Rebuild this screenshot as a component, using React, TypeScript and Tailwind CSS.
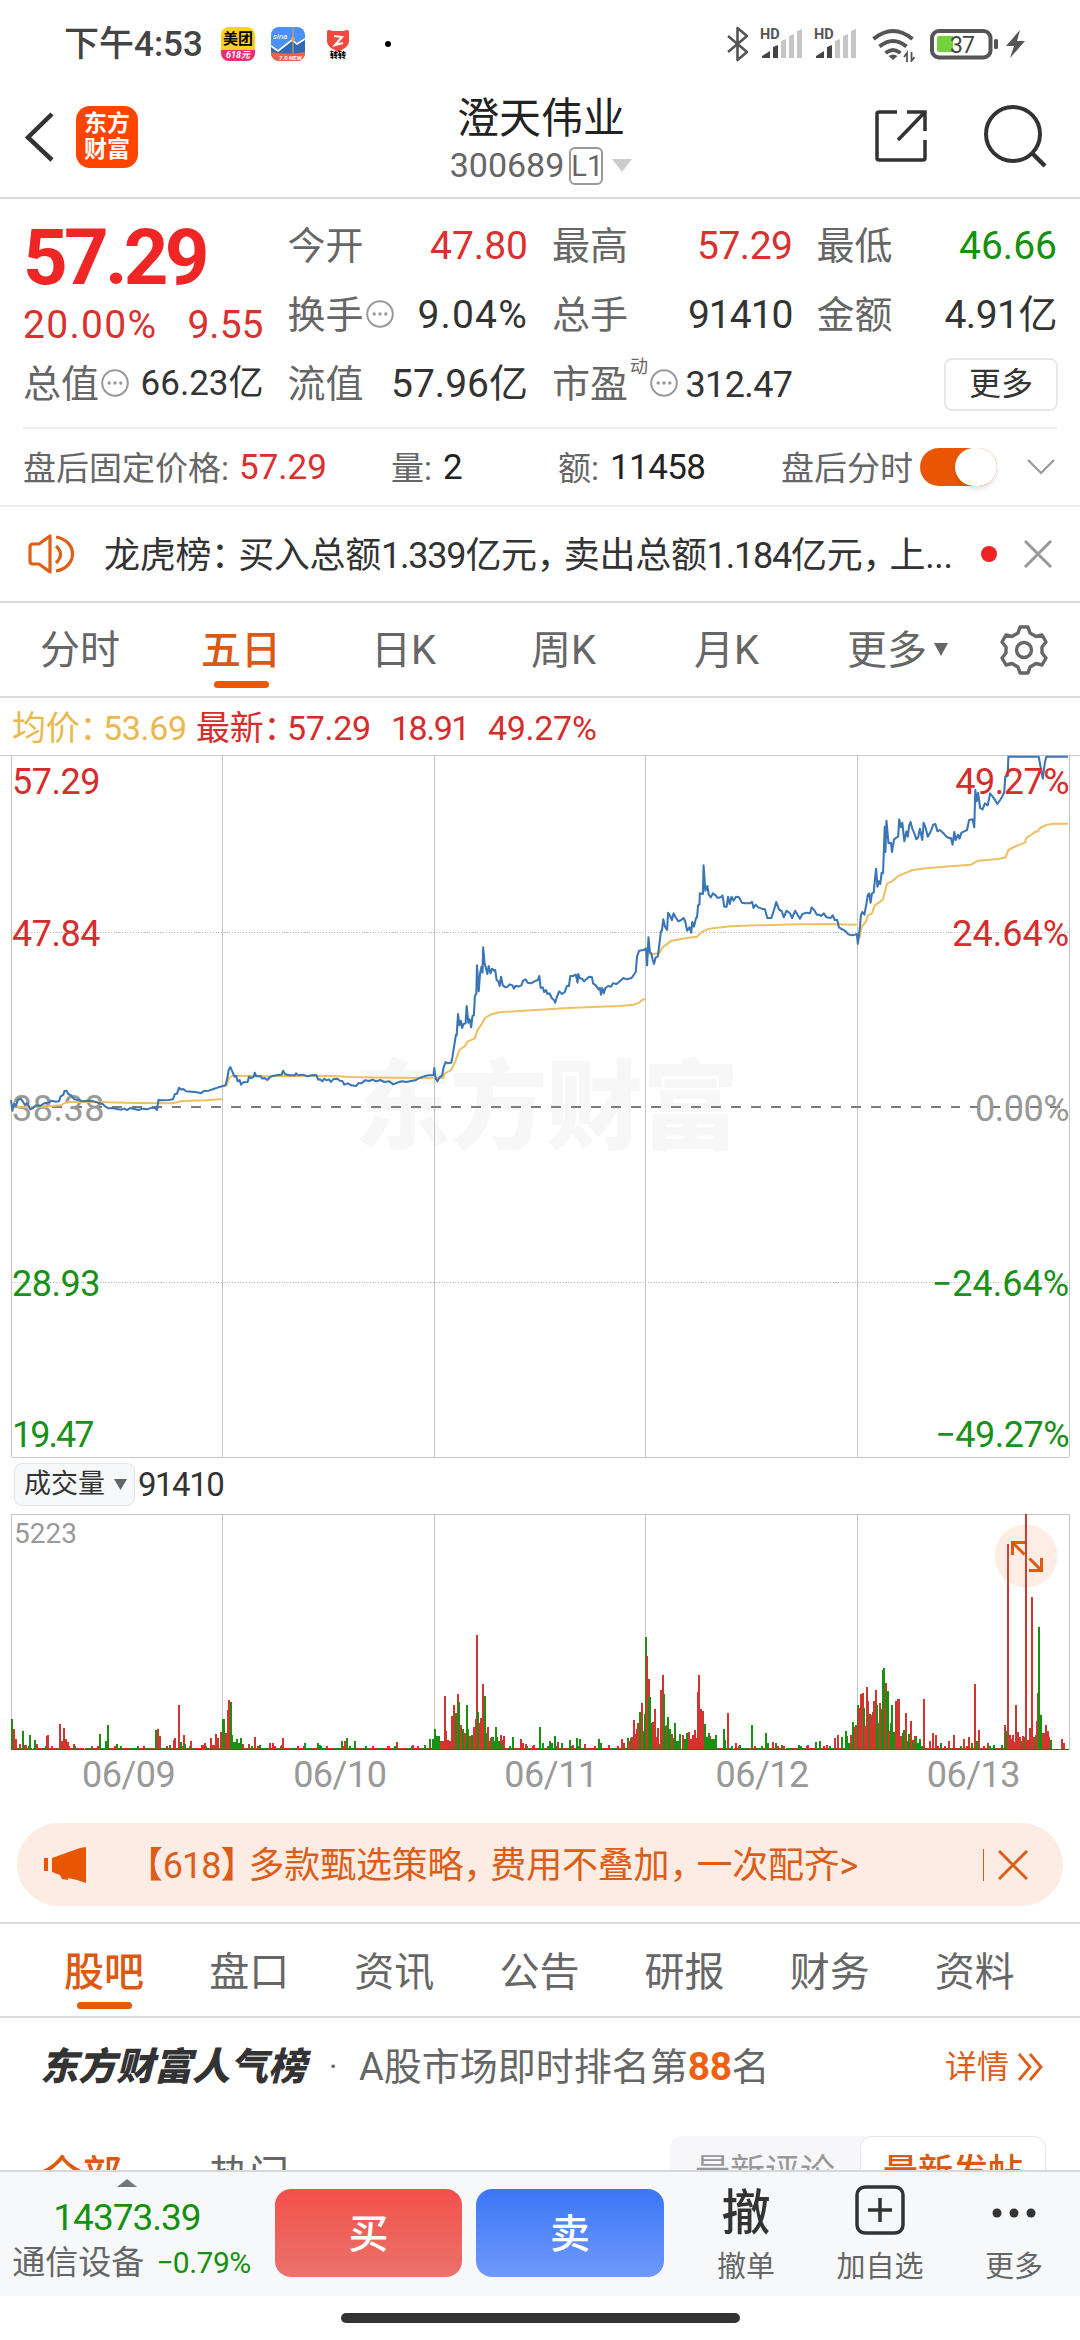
import type { ReactNode } from "react"

const RED = "#e62828"
const GREEN = "#1a8f12"

// Both charts share one horizontal scale: 3136 units across the screen
const DAY_LINES = [34, 646.5, 1261.5, 1874.5, 2489.5, 3105]

const PRICE = `32,1080 36,1112 41,1090 46,1098 52,1080 60,1076 66,1084 72,1094 80,1090 88,1108 96,1104 104,1096 116,1098 128,1090 140,1088 150,1082 162,1085 171,1084 176,1070 184,1064 187,1053 193,1052 198,1062 206,1066 216,1078 228,1080 240,1084 256,1082 272,1084 284,1088 298,1092 306,1100 316,1105 328,1104 340,1107 352,1109 360,1106 370,1110 378,1104 390,1107 402,1110 414,1106 428,1108 440,1103 450,1104 456,1110 460,1080 474,1081 490,1080 502,1078 508,1062 514,1061 520,1043 526,1049 532,1047 540,1054 556,1055 572,1057 584,1060 592,1053 606,1052 620,1047 634,1042 648,1038 655,1036 660,1014 664,990 669,981 675,996 681,1010 686,1008 690,1024 696,1020 700,1034 706,1027 712,1027 719,1026 723,1010 729,1014 736,1011 740,998 744,1009 756,1008 762,1016 768,1014 776,1020 784,1011 792,1008 806,1005 818,1004 822,992 828,1003 840,1006 856,1006 860,1000 866,1006 880,1004 892,1009 906,1006 918,1005 924,1019 930,1018 936,1024 942,1016 948,1021 955,1018 961,1026 968,1017 980,1016 986,1022 994,1023 1000,1034 1010,1030 1020,1036 1034,1038 1040,1030 1050,1030 1060,1021 1072,1023 1082,1019 1092,1024 1104,1020 1116,1026 1130,1024 1142,1033 1156,1027 1168,1024 1180,1026 1194,1023 1206,1021 1218,1014 1232,1009 1244,1006 1259,1006 1261,984 1265,1016 1270,1024 1276,1012 1284,1006 1288,982 1294,966 1300,970 1310,968 1314,950 1318,922 1324,884 1326,886 1330,822 1334,856 1338,842 1342,864 1346,852 1352,850 1355,798 1360,848 1364,838 1368,862 1372,828 1376,826 1379,768 1383,762 1385,676 1390,754 1394,700 1398,680 1401,698 1403,622 1407,670 1412,688 1415,702 1419,678 1424,700 1429,686 1434,692 1438,690 1442,720 1447,724 1451,738 1455,710 1460,736 1468,742 1474,740 1480,733 1488,736 1492,746 1498,737 1506,740 1514,736 1519,722 1526,718 1532,728 1542,730 1552,724 1562,720 1566,708 1570,744 1576,742 1580,756 1585,750 1590,762 1596,760 1602,774 1610,782 1612,788 1618,768 1624,754 1632,762 1640,756 1646,738 1652,738 1656,708 1664,708 1672,704 1677,728 1679,702 1683,714 1690,716 1696,724 1704,716 1712,710 1719,712 1722,730 1730,736 1738,748 1742,744 1745,764 1749,744 1753,760 1758,744 1766,738 1774,740 1780,730 1790,732 1800,724 1810,714 1820,718 1834,714 1842,702 1846,696 1850,648 1856,632 1868,630 1876,626 1879,676 1883,592 1887,636 1891,640 1895,658 1899,672 1904,652 1910,650 1915,610 1919,574 1922,572 1926,538 1931,560 1937,570 1940,518 1946,528 1951,540 1956,520 1963,534 1970,544 1978,540 1985,534 1990,546 1995,572 2002,562 2007,578 2010,546 2015,560 2021,534 2024,532 2027,496 2031,494 2032,460 2041,462 2043,376 2048,452 2054,438 2058,464 2064,472 2070,460 2078,466 2084,474 2092,472 2098,466 2103,500 2110,500 2114,470 2119,492 2124,470 2130,482 2137,470 2146,472 2154,488 2164,490 2176,490 2184,486 2188,504 2194,494 2202,502 2212,506 2221,508 2228,534 2240,534 2248,508 2254,486 2262,508 2270,514 2276,532 2284,512 2294,520 2300,534 2309,512 2318,528 2323,536 2330,522 2342,518 2352,520 2357,502 2364,510 2372,524 2378,524 2384,528 2392,520 2400,532 2412,534 2418,526 2424,540 2431,540 2436,562 2446,568 2456,574 2462,582 2472,586 2482,584 2488,582 2491,612 2497,560 2500,524 2504,516 2510,524 2516,490 2520,464 2524,460 2528,488 2532,460 2537,458 2542,404 2544,386 2548,440 2552,424 2556,432 2560,398 2564,400 2567,320 2569,260 2571,336 2574,242 2580,310 2587,308 2590,336 2596,298 2604,292 2608,290 2611,238 2616,262 2620,248 2626,304 2632,274 2636,290 2640,256 2644,246 2649,266 2655,280 2661,298 2666,292 2671,266 2678,300 2682,248 2688,264 2694,290 2702,276 2710,254 2716,252 2722,274 2729,270 2738,278 2748,290 2756,294 2761,294 2766,314 2771,276 2775,300 2782,284 2786,296 2792,278 2800,274 2808,270 2814,240 2824,238 2829,262 2832,150 2836,184 2840,158 2846,204 2853,208 2860,190 2868,196 2875,160 2881,168 2888,178 2896,192 2904,180 2910,170 2916,156 2919,110 2926,108 2928,50 3016,50 3020,72 3028,116 3034,68 3038,50 3101,50`

const AVERAGE = [
  "34,1098 60,1101 90,1102 120,1100 150,1098 176,1096 188,1089 204,1086 280,1086 400,1089 500,1090 530,1083 600,1081 646,1077",
  "648,1038 658,1036 666,1012 680,1007 780,1009 950,1007 1020,1011 1140,1013 1258,1014",
  "1263,1014 1286,1014 1292,1000 1310,990 1322,964 1334,930 1350,918 1358,904 1378,896 1386,872 1400,850 1408,834 1424,824 1450,817 1520,812 1568,809 1650,804 1720,801 1800,798 1840,794 1856,788 1864,780 1874,777",
  "1877,640 1900,642 1914,640 1924,622 1950,602 1990,595 2024,590 2040,574 2060,566 2120,559 2200,556 2320,553 2400,552 2488,554",
  "2491,600 2496,592 2502,560 2514,546 2520,526 2532,520 2540,496 2552,488 2564,478 2576,430 2590,424 2612,406 2632,398 2650,390 2690,385 2760,379 2820,374 2840,362 2900,357 2920,352 2928,330 2950,318 2976,308 2980,294 2998,282 3004,276 3014,274 3020,264 3040,254 3060,251 3101,251",
]

// x, height, colour of every visible volume spike
const SPIKES: [number, number, string][] = [
  [34, 92, "g"], [40, 62, "r"], [45, 32, "r"], [58, 17, "r"], [68, 56, "g"], [74, 14, "r"], [88, 43, "g"], [101, 28, "g"], [107, 16, "r"], [136, 40, "r"], [140, 43, "r"],
  [174, 76, "r"], [180, 24, "r"], [187, 64, "r"], [192, 30, "r"], [196, 22, "r"], [215, 16, "r"], [291, 45, "g"], [309, 26, "g"], [313, 74, "g"], [341, 16, "g"], [400, 11, "g"],
  [453, 59, "g"], [460, 60, "r"], [464, 40, "r"], [494, 14, "g"], [504, 28, "r"], [508, 34, "r"], [519, 132, "r"], [526, 22, "g"], [534, 42, "r"], [538, 16, "g"], [554, 26, "r"],
  [588, 12, "r"], [594, 18, "r"], [613, 33, "r"], [620, 12, "r"], [628, 47, "r"], [634, 35, "r"], [643, 52, "r"], [649, 92, "g"], [655, 48, "r"], [661, 118, "r"], [666, 148, "r"], [671, 142, "g"],
  [675, 44, "g"], [681, 22, "g"], [688, 32, "g"], [694, 18, "g"], [700, 34, "g"], [706, 16, "r"], [723, 16, "r"], [740, 36, "r"], [754, 14, "g"], [784, 18, "r"], [792, 20, "r"], [818, 12, "r"], [822, 33, "r"],
  [886, 18, "g"], [923, 20, "g"], [930, 12, "g"], [992, 24, "g"], [1001, 24, "r"], [1008, 34, "g"], [1032, 26, "g"], [1126, 10, "r"], [1153, 22, "r"], [1199, 12, "r"], [1235, 13, "g"],
  [1249, 32, "g"], [1256, 32, "g"], [1262, 60, "g"], [1268, 40, "g"], [1276, 40, "g"], [1281, 24, "r"], [1286, 26, "r"], [1291, 160, "r"], [1296, 54, "r"], [1302, 28, "r"], [1308, 24, "r"],
  [1314, 100, "r"], [1319, 134, "r"], [1325, 110, "g"], [1330, 166, "r"], [1333, 142, "g"], [1339, 72, "r"], [1345, 60, "g"], [1351, 50, "r"], [1356, 134, "g"], [1360, 62, "g"], [1366, 40, "r"], [1371, 42, "g"],
  [1377, 68, "r"], [1382, 92, "r"], [1386, 342, "r"], [1389, 112, "g"], [1394, 80, "r"], [1398, 94, "r"], [1403, 196, "r"], [1407, 160, "g"], [1412, 48, "g"], [1418, 66, "r"], [1424, 26, "r"], [1430, 38, "g"],
  [1436, 20, "g"], [1441, 68, "g"], [1448, 24, "g"], [1454, 44, "r"], [1459, 18, "g"], [1490, 38, "g"], [1513, 30, "r"], [1519, 20, "r"], [1526, 16, "r"], [1550, 14, "r"],
  [1569, 68, "g"], [1576, 20, "g"], [1590, 10, "g"], [1597, 24, "g"], [1603, 18, "g"], [1612, 40, "g"], [1619, 22, "r"], [1632, 18, "g"], [1656, 28, "g"], [1664, 14, "r"], [1676, 33, "g"], [1683, 32, "g"], [1699, 16, "r"],
  [1740, 30, "g"], [1746, 18, "g"], [1768, 14, "r"], [1805, 30, "r"], [1812, 20, "r"], [1826, 24, "r"], [1831, 34, "g"], [1836, 38, "r"], [1840, 88, "r"], [1845, 46, "r"], [1850, 62, "r"], [1854, 78, "r"], [1859, 112, "g"],
  [1864, 138, "r"], [1869, 56, "g"], [1873, 106, "g"], [1877, 336, "g"], [1880, 280, "r"], [1883, 210, "r"], [1886, 156, "g"], [1891, 80, "g"], [1896, 82, "r"], [1901, 120, "r"], [1906, 38, "r"], [1911, 64, "r"],
  [1918, 178, "r"], [1922, 132, "r"], [1926, 224, "r"], [1929, 166, "g"], [1933, 70, "g"], [1937, 72, "r"], [1941, 98, "g"], [1946, 62, "g"], [1952, 46, "r"], [1959, 80, "g"], [1964, 26, "g"], [1970, 24, "g"], [1975, 46, "g"], [1982, 44, "r"],
  [1988, 32, "g"], [1994, 48, "g"], [2002, 52, "r"], [2010, 28, "r"], [2018, 58, "r"], [2026, 172, "r"], [2030, 222, "r"], [2034, 120, "r"], [2038, 58, "r"], [2042, 114, "r"], [2046, 76, "g"], [2052, 36, "g"], [2060, 50, "g"], [2066, 32, "g"],
  [2079, 26, "g"], [2101, 62, "g"], [2106, 28, "g"], [2114, 108, "r"], [2138, 20, "r"], [2148, 14, "g"], [2184, 74, "g"], [2224, 50, "g"], [2230, 20, "g"], [2244, 22, "r"], [2252, 20, "g"], [2272, 14, "g"], [2320, 12, "g"], [2345, 14, "r"], [2370, 22, "g"], [2382, 24, "g"], [2402, 14, "r"],
  [2424, 34, "r"], [2433, 44, "r"], [2444, 38, "g"], [2456, 54, "g"], [2470, 44, "r"], [2477, 82, "g"], [2482, 66, "r"], [2487, 74, "r"], [2491, 132, "g"], [2495, 124, "r"], [2500, 166, "r"], [2505, 170, "r"], [2509, 124, "g"], [2513, 70, "r"], [2518, 188, "r"], [2521, 146, "r"], [2525, 106, "g"], [2530, 102, "r"], [2535, 112, "r"],
  [2539, 144, "r"], [2544, 178, "r"], [2547, 132, "g"], [2551, 80, "g"], [2556, 138, "r"], [2560, 120, "g"], [2564, 238, "g"], [2567, 243, "g"], [2570, 120, "r"], [2574, 198, "r"], [2577, 174, "g"], [2582, 56, "r"], [2587, 78, "g"], [2591, 134, "g"], [2597, 52, "g"], [2602, 144, "r"], [2609, 152, "r"], [2615, 40, "r"], [2621, 48, "g"],
  [2626, 58, "g"], [2632, 108, "r"], [2639, 46, "g"], [2645, 86, "r"], [2652, 22, "g"], [2660, 36, "g"], [2684, 152, "r"], [2700, 24, "r"], [2709, 50, "r"], [2717, 44, "r"], [2732, 20, "g"], [2756, 26, "r"], [2769, 42, "r"], [2798, 30, "r"], [2813, 38, "r"], [2823, 20, "g"], [2831, 196, "r"], [2837, 26, "g"], [2842, 58, "r"], [2870, 18, "r"], [2885, 14, "g"],
  [2910, 12, "g"], [2918, 74, "r"], [2922, 56, "g"], [2928, 615, "r"], [2934, 42, "r"], [2940, 30, "r"], [2950, 134, "r"], [2956, 52, "r"], [2962, 38, "r"], [2970, 40, "r"], [2979, 720, "r"], [2991, 64, "r"], [2997, 458, "r"], [3002, 36, "r"], [3012, 86, "r"], [3014, 170, "r"], [3017, 368, "g"], [3022, 102, "g"], [3030, 50, "r"], [3037, 72, "r"], [3042, 56, "r"], [3047, 36, "r"], [3083, 32, "r"], [3088, 20, "r"],
]

// quiet minutes between the spikes, denser around the opens
const QUIET = Array.from({ length: 500 }, (_, i) => {
  const x = 34 + i * 6.04
  const busy = (x > 1290 && x < 1460) || (x > 1820 && x < 2080) || (x > 2450 && x < 2670) || (x > 2915 && x < 3050)
  const wave = (i * 37) % 11
  return { x, h: busy ? 14 + wave * 3 : wave > 8 ? 11 : 5, up: (i * 13) % 7 < 4 }
})

function MoreDot() {
  return (
    <svg className="w-7 h-7 mx-[2px] -mt-[3px] shrink-0" viewBox="0 0 28 28">
      <circle cx="14" cy="14" r="12.8" fill="none" stroke="#999" strokeWidth="2" />
      <g fill="#999">
        <circle cx="8.2" cy="14" r="1.7" />
        <circle cx="14" cy="14" r="1.7" />
        <circle cx="19.8" cy="14" r="1.7" />
      </g>
    </svg>
  )
}

function Cell({ label, value, tone = "text-[#333]", extra }: { label: string; value: string; tone?: string; extra?: ReactNode }) {
  return (
    <div className="flex items-center h-[69px]">
      <span className="text-[38px] text-[#666]">{label}</span>
      {extra}
      <span className={`ml-auto text-[39px] ${tone}`}>{value}</span>
    </div>
  )
}

function StatusBar() {
  return (
    <div className="flex items-center h-[88px] pl-16 text-[#444]">
      <span className="w-[157px] pt-[2px] text-[35px] font-medium">下午4:53</span>
      <div className="flex flex-col w-[34px] h-[34px] rounded-lg overflow-hidden bg-[#fad21e] text-center">
        <span className="h-6 pt-[2px] text-[15px] leading-[20px] font-bold text-black">美团</span>
        <span className="h-[11px] bg-[#e92f6f] text-[9px] leading-[10px] italic font-bold text-white">618元</span>
      </div>
      <svg className="w-[34px] h-[34px] ml-4 rounded-lg" viewBox="0 0 34 34">
        <rect width="34" height="34" fill="#4a90f5" />
        <path d="M0 19l7 5 14-11 5 4 8-5v16H0z" fill="#3568b5" />
        <path d="M0 19l7 5 14-11 5 4 8-5" fill="none" stroke="#fff" strokeWidth="1.6" />
        <path d="M22 0v27" stroke="#d69a58" strokeWidth="1.2" />
        <circle cx="22" cy="12" r="2" fill="#e8a550" />
        <path d="M0 25q17 3 34 0v9H0z" fill="#ea6248" />
        <text x="2" y="12" fontSize="8" fontStyle="italic" fill="#fff">sina</text>
        <text x="8" y="32.5" fontSize="6" fontWeight="700" fill="#fff">7.0 NEW</text>
      </svg>
      <div className="flex flex-col items-center w-[34px] h-[34px] ml-4">
        <svg className="w-6 h-[23px] mt-[2px]" viewBox="0 0 24 23">
          <path d="M1 2q2-2 5 0h12q3-2 5 0v10c0 6-6 8-11 11C7 20 1 18 1 12z" fill="#f5483d" />
          <path d="M8 7l8 1-7 8 8-2" fill="none" stroke="#fff" strokeWidth="2.2" />
        </svg>
        <span className="text-[8px] leading-[8px] font-black text-black">转转</span>
      </div>
      <span className="w-[6px] h-[6px] ml-[30px] rounded-full bg-black" />
      <svg className="w-[304px] h-9 ml-[331px]" viewBox="722 26 304 36">
        <path d="M728 36l19 16-9.500 8V28l9.500 8-19 16" fill="none" stroke="#555" strokeWidth="2.600" strokeLinejoin="round" />
        <g fontSize="14.500" fontWeight="700" fill="#555">
          <text x="760" y="39">HD</text>
          <text x="814" y="39">HD</text>
        </g>
        <g fill="#444">
          <path d="M762 58v-2l8-5v7zM773 58V47l5-2v13zM816 58v-2l8-5v7zM827 58V47l5-2v13z" />
        </g>
        <g fill="#c6c6c6">
          <path d="M781 58V41l5-2v19zM789 58V36l5-2v24zM797 58V31l5-2v29zM835 58V41l5-2v19zM843 58V36l5-2v24zM851 58V31l5-2v29z" />
        </g>
        <g fill="none" stroke="#555" strokeWidth="4">
          <path d="M873.500 39q19.500-16 39 0M879.500 46.500q13.500-11 27 0M885.500 53q7.500-6 15 0" />
        </g>
        <path d="M888.500 56q4.500-3 9 0l-4.500 4z" fill="#555" />
        <path d="M907 62v-9l-3 4M911.500 52v9l3-4" fill="none" stroke="#555" strokeWidth="1.800" />
        <rect x="932" y="31" width="58.500" height="26.500" rx="7" fill="none" stroke="#555" strokeWidth="4" />
        <path d="M937 38q0-2 2-2h14v16h-14q-2 0-2-2z" fill="#74d13c" />
        <text x="950" y="53" fontSize="23" letterSpacing="-1" fill="#444">37</text>
        <rect x="994" y="39" width="4" height="10" rx="1.500" fill="#555" />
        <path d="M1020 30l-14 16h8l-4 12 15-17h-8z" fill="#555" />
      </svg>
    </div>
  )
}

function Header() {
  return (
    <div className="flex items-center h-[111px] px-6 border-b-2 border-[#dcdcdc]">
      <svg className="w-[30px] h-[52px] -mt-[11px]" viewBox="0 0 30 52" fill="none" stroke="#333" strokeWidth="4.500">
        <path d="M28 3L4 26.500 28 49" />
      </svg>
      <div className="flex flex-col justify-center w-[62px] h-[62px] -mt-[11px] ml-[22px] rounded-[14px] bg-[#ff4400] text-white text-center text-[23px] leading-[26px] font-bold">
        <span>东方</span>
        <span>财富</span>
      </div>
      <div className="flex flex-col items-center w-[806px]">
        <span className="-mt-2 text-[42px] leading-[54px] text-[#222]">澄天伟业</span>
        <div className="flex items-center h-10">
          <span className="text-[34px] text-[#666]">300689</span>
          <span className="w-[34px] h-[38px] ml-[5px] rounded-md border-2 border-[#999] text-center text-[29px] leading-[34px] text-[#666]">L1</span>
          <svg className="w-5 h-[13px] ml-[9px]" viewBox="0 0 20 13" fill="#ccc">
            <path d="M0 0h20L10 13z" />
          </svg>
        </div>
      </div>
      <svg className="w-[54px] h-[54px] -mt-[13px] -ml-[70px] shrink-0" viewBox="0 0 54 54" fill="none" stroke="#333" strokeWidth="3.500">
        <path d="M23 3H5q-2 0-2 2v44q0 2 2 2h44q2 0 2-2V31M33 3h18v19M50 4L24 31" />
      </svg>
      <svg className="w-16 h-16 -mt-[11px] ml-[56px] shrink-0" viewBox="0 0 64 64" fill="none" stroke="#333" strokeWidth="4">
        <circle cx="29" cy="29" r="27" />
        <path d="M48 48l13 13" strokeWidth="4.500" />
      </svg>
    </div>
  )
}

function Quote() {
  return (
    <div className="h-[230px] pl-[23px] pr-[23px] pt-[13px]">
      <div className="grid grid-cols-4 gap-x-6 h-[207px] whitespace-nowrap">
        <div>
          <div className="h-[89px] text-[78px] leading-[92px] font-bold tracking-[-3.800px] text-[#ee2626]">57.29</div>
          <div className="flex justify-between items-center h-[49px] text-[39px] text-[#d93030]">
            <span className="tracking-[1.300px]">20.00%</span>
            <span>9.55</span>
          </div>
          <div className="flex items-center h-[69px]">
            <span className="text-[38px] text-[#666]">总值</span>
            <MoreDot />
            <span className="ml-auto text-[35px] text-[#333]">66.23亿</span>
          </div>
        </div>
        <div>
          <Cell label="今开" value="47.80" tone="text-[#d93030]" />
          <Cell label="换手" value="9.04%" tone="text-[#333] tracking-[1.200px]" extra={<MoreDot />} />
          <Cell label="流值" value="57.96亿" />
        </div>
        <div>
          <Cell label="最高" value="57.29" tone="text-[#d93030] tracking-[-0.500px]" />
          <Cell label="总手" value="91410" tone="text-[#333] tracking-[-1px]" />
          <div className="flex items-center h-[69px]">
            <span className="text-[38px] text-[#666]">市盈</span>
            <span className="w-[18px] ml-[2px] mb-9 text-[18px] text-[#666]">动</span>
            <MoreDot />
            <span className="ml-auto text-[36px] tracking-[-0.600px] text-[#333]">312.47</span>
          </div>
        </div>
        <div>
          <Cell label="最低" value="46.66" tone="text-[#169010]" />
          <Cell label="金额" value="4.91亿" tone="text-[#333] tracking-[-0.500px]" />
          <div className="flex justify-end items-center h-[69px]">
            <span className="w-[114px] h-[53px] -mr-px rounded-lg border-2 border-[#e8e8e8] text-center text-[32px] leading-[49px] text-[#333]">更多</span>
          </div>
        </div>
      </div>
      <div className="mt-[8px] border-b-2 border-[#eee]" />
    </div>
  )
}

function AfterHours() {
  return (
    <div className="flex items-center h-[78px] pt-[3px] pl-[23px] border-b-2 border-[#eee] text-[33px] text-[#666] whitespace-nowrap">
      <span className="w-[216px]">盘后固定价格:</span>
      <span className="w-[152px] text-[35px] text-[#d93030]">57.29</span>
      <span className="w-[52px]">量:</span>
      <span className="w-[115px] text-[35px] text-[#222]">2</span>
      <span className="w-[52px]">额:</span>
      <span className="w-[171px] text-[35px] tracking-[-0.600px] text-[#222]">11458</span>
      <span className="w-[139px]">盘后分时</span>
      <span className="flex justify-end w-[77px] h-[38px] -mt-[3px] rounded-full bg-[#ea5504]">
        <span className="w-[42px] h-[38px] rounded-full bg-white shadow-md" />
      </span>
      <svg className="w-7 h-4 -mt-[3px] ml-[30px]" viewBox="0 0 28 16" fill="none" stroke="#999" strokeWidth="2.200">
        <path d="M1 1l13 13L27 1" />
      </svg>
    </div>
  )
}

function News() {
  return (
    <div className="flex items-center h-24 pl-7 border-b-2 border-[#dcdcdc] whitespace-nowrap">
      <svg className="w-[48px] h-10" viewBox="0 0 48 40" fill="none" stroke="#dd5f18" strokeWidth="3.200">
        <path d="M22 2v36l-11-8H5q-3 0-3-3V13q0-3 3-3h6zM28 12q9 8 0 17M28 3c22 4 22 30 0 34" strokeLinejoin="round" />
      </svg>
      <span className="w-[877px] ml-7 pt-[3px] text-[36px] tracking-[-0.300px] text-[#333]">
        龙虎榜<span className="tracking-[-9px]">：</span>买入总额<span className="tracking-[-1.200px]">1.339</span>亿元<span className="tracking-[-9px]">，</span>卖出总额<span className="tracking-[-1.200px]">1.184</span>亿元<span className="tracking-[-9px]">，</span>上...
      </span>
      <span className="w-4 h-4 rounded-full bg-[#ee2222]" />
      <svg className="w-7 h-7 ml-[27px]" viewBox="0 0 28 28" fill="none" stroke="#999" strokeWidth="3">
        <path d="M1 1l26 26M27 1L1 27" />
      </svg>
    </div>
  )
}

function PeriodTabs() {
  return (
    <div className="flex items-center h-[95px] pt-[3px] pl-10 border-b-2 border-[#dcdcdc] text-[40px] text-[#666] whitespace-nowrap">
      <span className="w-[161px]">分时</span>
      <span className="relative w-[170px] font-medium text-[#dd5810]">
        五日
        <i className="absolute left-[13px] -bottom-[7px] w-[55px] h-[7px] rounded-full bg-[#e85a08]" />
      </span>
      <span className="w-[160px]">日K</span>
      <span className="w-[163px]">周K</span>
      <span className="w-[153px]">月K</span>
      <span>更多</span>
      <svg className="w-[14px] h-[13px] -mt-[3px] ml-[7px]" viewBox="0 0 14 13" fill="#666">
        <path d="M0 0h14L7 13z" />
      </svg>
      <svg className="w-12 h-[50px] -mt-[2px] ml-[52px]" viewBox="0 0 48 50" fill="none" stroke="#666" strokeWidth="3.400" strokeLinejoin="round">
        <path d="M20 2h8l2 6 6 3.500 6-1.500 4 7-4 5v6l4 5-4 7-6-1.500-6 3.500-2 6h-8l-2-6-6-3.500L6 40l-4-7 4-5v-6l-4-5 4-7 6 1.500L18 8z" />
        <circle cx="24" cy="25" r="7.500" />
      </svg>
    </div>
  )
}

function PriceChart() {
  return (
    <div className="relative h-[704px] text-[36px] leading-[36px] tracking-[-0.500px] text-[#d62c2c]">
      <span className="absolute left-[354px] top-[297px] text-[97px] leading-[112px] font-black tracking-[-1px] text-[#f7f7f7]">东方财富</span>
      <svg className="absolute inset-0 w-full h-full" viewBox="0 45 3136 2112" preserveAspectRatio="none" fill="none" shapeRendering="crispEdges">
        <path d="M0 46.500H3136M34 2152.500H3105" stroke="#c8c8c8" strokeWidth="3" />
        {DAY_LINES.map((x) => (
          <path key={x} d={`M${x} 48V2152`} stroke="#c4c4c4" strokeWidth="3" />
        ))}
        <path d="M34 577.500H3105M34 1628H3105" stroke="#bbb" strokeWidth="3" strokeDasharray="3 5" />
        <path d="M34 1101H3105" stroke="#7c7c7c" strokeWidth="6" strokeDasharray="29 29" />
      </svg>
      <span className="absolute left-3 top-[336px] tracking-[0.500px] text-[#999]">38.38</span>
      <svg className="absolute inset-0 w-full h-full" viewBox="0 45 3136 2112" preserveAspectRatio="none" fill="none" strokeLinejoin="round">
        {AVERAGE.map((points) => (
          <polyline key={points} points={points} stroke="#edc063" strokeWidth="6" />
        ))}
        <polyline points={PRICE} stroke="#3a75b5" strokeWidth="6" />
      </svg>
      <span className="absolute left-3 top-[9px]">57.29</span>
      <span className="absolute left-3 top-[161px]">47.84</span>
      <span className="absolute left-3 top-[511px] text-[#1a9018]">28.93</span>
      <span className="absolute left-3 top-[662px] tracking-[-2px] text-[#1a9018]">19.47</span>
      <span className="absolute right-[11px] top-[9px]">49.27%</span>
      <span className="absolute right-[11px] top-[161px] tracking-normal">24.64%</span>
      <span className="absolute right-[11px] top-[336px] text-[#999]">0.00%</span>
      <span className="absolute right-[11px] top-[511px] tracking-normal text-[#1a9018]">−24.64%</span>
      <span className="absolute right-[11px] top-[662px] text-[#1a9018]">−49.27%</span>
    </div>
  )
}

function VolumeChart() {
  return (
    <>
      <div className="flex items-center h-[55px] pl-[14px] pb-[9px] pt-[5px] text-[#333]">
        <div className="flex items-center w-[121px] h-[43px] pl-[9px] rounded-lg border border-[#e4e4e6] bg-[#f7f8fa] text-[27px]">
          <span className="w-[90px]">成交量</span>
          <svg className="w-[13px] h-[11px]" viewBox="0 0 13 11" fill="#666">
            <path d="M0 0h13L6.500 11z" />
          </svg>
        </div>
        <span className="ml-[3px] text-[33px] tracking-[-1.500px]">91410</span>
      </div>
      <div className="relative h-[236px]">
        <svg className="w-full h-full" viewBox="0 42 3136 708" preserveAspectRatio="none" shapeRendering="crispEdges">
          <g stroke="#c4c4c4" strokeWidth="3">
            <path d="M34 43.500H3105" />
            {DAY_LINES.map((x) => (
              <path key={x} d={`M${x} 43V748`} />
            ))}
          </g>
          <path d="M32 748H3105" stroke="#a8301c" strokeWidth="5" />
          {QUIET.map((b) => (
            <rect key={b.x} x={b.x} y={748 - b.h} width="6" height={b.h} fill={b.up ? RED : GREEN} />
          ))}
          {SPIKES.map(([x, h, tone]) => (
            <rect key={x} x={x - 3} y={748 - h} width="6" height={h} fill={tone === "r" ? "#d03530" : GREEN} />
          ))}
        </svg>
        <span className="absolute left-[14px] top-[5px] text-[28px] leading-[30px] text-[#999]">5223</span>
        <svg className="absolute left-[994px] top-[10px] w-16 h-16" viewBox="0 0 64 64" fill="none" stroke="#dd5a12" strokeWidth="3">
          <circle cx="32" cy="32" r="31.500" fill="#f26a21" fillOpacity="0.120" stroke="none" />
          <path d="M31 18.500H18.500V31M18.500 18.500l12 12M35 46.500h12.500V34M47.500 46.500l-12-12" />
        </svg>
      </div>
      <div className="grid grid-cols-5 h-[73px] pl-[23px] pr-[1px] pt-[5px] text-center text-[36px] leading-[40px] tracking-[-0.500px] text-[#999]">
        {["06/09", "06/10", "06/11", "06/12", "06/13"].map((d) => (
          <span key={d}>{d}</span>
        ))}
      </div>
    </>
  )
}

function Promo() {
  return (
    <div className="flex items-center h-[83px] mx-[17px] mb-4 pl-[27px] rounded-full bg-[#fcece3] text-[#dc5d17] whitespace-nowrap">
      <svg className="w-[43px] h-9 shrink-0" viewBox="0 0 43 36" fill="#e85604">
        <path d="M0 11h4v13H0zM8 11L36 1l6-1v36l-9-3-9-2v2l-6-1-2-4-8-3z" />
      </svg>
      <span className="w-[856px] ml-[40px] pt-[3px] text-[36px] tracking-[-0.200px]">
        【<span className="tracking-[-1px]">618</span><span className="tracking-[-8px]">】</span>多款甄选策略<span className="tracking-[-9px]">，</span>费用不叠加<span className="tracking-[-9px]">，</span>一次配齐&gt;
      </span>
      <span className="w-px h-8 bg-[#dc5d17]" />
      <svg className="w-[30px] h-[30px] ml-[14px] shrink-0" viewBox="0 0 30 30" fill="none" stroke="#dc5d17" strokeWidth="3">
        <path d="M1 1l28 28M29 1L1 29" />
      </svg>
    </div>
  )
}

function InfoTabs() {
  return (
    <div className="flex items-center h-24 pt-[5px] pl-16 border-y-2 border-[#dcdcdc] text-[40px] text-[#666]">
      <span className="relative w-[145.500px] font-medium text-[#dd5810]">
        股吧
        <i className="absolute left-[13px] -bottom-[6px] w-[55px] h-[7px] rounded-full bg-[#dd5a12]" />
      </span>
      {["盘口", "资讯", "公告", "研报", "财务", "资料"].map((t) => (
        <span key={t} className="w-[145.500px]">{t}</span>
      ))}
    </div>
  )
}

function Forum() {
  return (
    <div className="h-[152px] overflow-hidden whitespace-nowrap">
      <div className="flex items-center h-[98px] pl-10 text-[38px] text-[#666]">
        <span className="w-[289px] font-black italic text-[#333]">东方财富人气榜</span>
        <span className="w-[30px] text-[32px]">·</span>
        <span>A股市场即时排名第</span>
        <b className="text-[39px] tracking-[-0.500px] text-[#f06010]">88</b>
        <span>名</span>
        <span className="ml-auto text-[32px] text-[#dc5d17]">详情</span>
        <svg className="w-[27px] h-7 ml-2 mr-9" viewBox="0 0 27 28" fill="none" stroke="#dc5d17" strokeWidth="2.800">
          <path d="M2 1l11 13L2 27M13 1l11 13-11 13" />
        </svg>
      </div>
      <div className="flex pl-[42px] pt-[20px] text-[40px]">
        <span className="w-[167px] pt-[10px] font-medium text-[#dd5810]">全部</span>
        <span className="w-[461px] pt-[10px] text-[#666]">热门</span>
        <div className="flex w-[376px] h-20 rounded-xl bg-[#f7f7f9] text-[35px]">
          <span className="w-[190px] pt-[11px] text-center text-[#999]">最新评论</span>
          <span className="w-[186px] pt-[10px] rounded-xl border border-[#e6e6e6] bg-white text-center font-medium text-[#dd5810]">最新发帖</span>
        </div>
      </div>
    </div>
  )
}

function TradeBar() {
  return (
    <div className="flex h-[126px] border-t-2 border-[#d5d8dc] bg-[#f6f8fa] text-[#666] whitespace-nowrap">
      <div className="flex flex-col items-center w-[252px] ml-[1px] pt-[7px]">
        <svg className="w-5 h-2" viewBox="0 0 20 8" fill="#777">
          <path d="M0 8h20L10 0z" />
        </svg>
        <span className="mt-[8px] text-[37px] leading-[46px] tracking-[-1px] text-[#169010]">14373.39</span>
        <div className="flex items-center mt-[1px] pl-[9px] text-[33px] leading-[42px]">
          通信设备<span className="ml-3 text-[30px] tracking-[-0.500px] text-[#169010]">−0.79%</span>
        </div>
      </div>
      <button className="w-[187px] h-[88px] mt-[17px] ml-[22px] pt-[3px] rounded-2xl bg-linear-to-b from-[#f3504a] to-[#ea716b] text-[40px] font-medium text-white">买</button>
      <button className="w-[188px] h-[88px] mt-[17px] ml-[14px] pt-[3px] rounded-2xl bg-linear-to-b from-[#3b76f6] to-[#6e99fc] text-[40px] font-medium text-white">卖</button>
      <div className="flex flex-col items-center w-[132px] ml-[16px] pt-[18px] text-[29px] leading-[38px]">
        <span className="h-[58px] text-[49px] leading-[48px] font-medium text-[#333]">撤</span>
        撤单
      </div>
      <div className="flex flex-col items-center w-[136px] pt-[13px] text-[29px] leading-[38px]">
        <svg className="w-[50px] h-[50px] mb-[13px]" viewBox="0 0 50 50" fill="none" stroke="#333" strokeWidth="3.500">
          <rect x="2" y="2" width="46" height="46" rx="8" />
          <path d="M13 25h24M25 13v24" />
        </svg>
        加自选
      </div>
      <div className="flex flex-col items-center w-[132px] pt-[13px] text-[29px] leading-[38px]">
        <svg className="w-[44px] h-[50px] mb-[13px]" viewBox="0 0 44 50" fill="#333">
          <circle cx="5" cy="28" r="4.500" />
          <circle cx="22" cy="28" r="4.500" />
          <circle cx="39" cy="28" r="4.500" />
        </svg>
        更多
      </div>
    </div>
  )
}

export default function App() {
  return (
    <div className="w-[1080px] h-[2340px] overflow-hidden bg-white font-['Roboto','Noto_Sans_CJK_SC',sans-serif]">
      <StatusBar />
      <Header />
      <Quote />
      <AfterHours />
      <News />
      <PeriodTabs />
      <div className="flex items-center h-[57px] pt-[3px] pl-3 text-[34px] tracking-[-0.300px] text-[#d62c2c] whitespace-nowrap">
        <span className="w-[91px] text-[#eab84e]">均价：</span>
        <span className="w-[93px] text-[#eab84e]">53.69</span>
        <span className="w-[91px]">最新：</span>
        <span className="w-[104px]">57.29</span>
        <span className="w-[97px] tracking-[-1.500px]">18.91</span>
        <span>49.27%</span>
      </div>
      <PriceChart />
      <VolumeChart />
      <Promo />
      <InfoTabs />
      <Forum />
      <TradeBar />
      <div className="flex justify-center pt-[17px]">
        <span className="w-[399px] h-[10px] rounded-full bg-[#333]" />
      </div>
    </div>
  )
}
